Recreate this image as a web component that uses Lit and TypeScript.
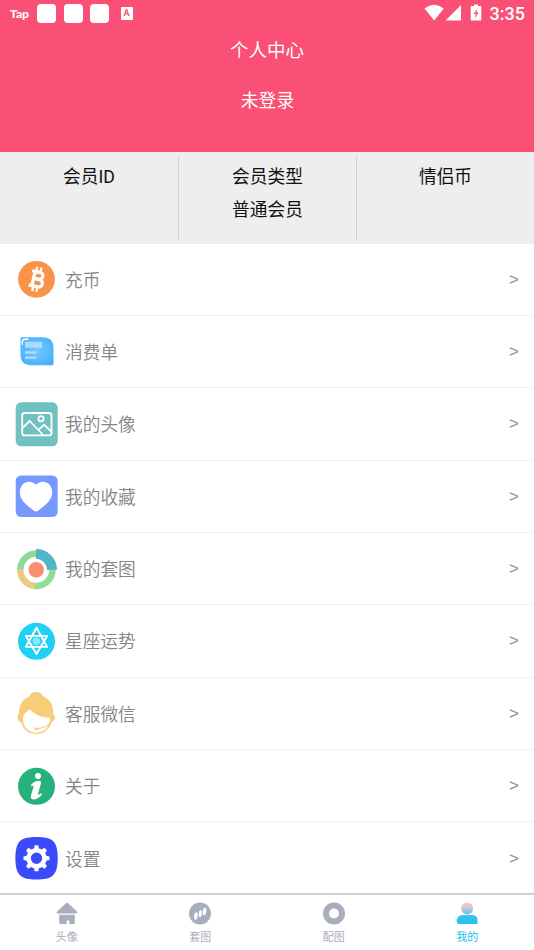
import { LitElement, html, svg, css } from "lit";
import { customElement } from "lit/decorators.js";
import { classMap } from "lit/directives/class-map.js";

const coin = svg`
  <circle cx="22" cy="22" r="18.400" fill="#f9924a"/>
  <g transform="rotate(12 22 22)" fill="none" stroke="#fff">
    <path d="M16 14.500h8.200a3.400 3.400 0 0 1 0 6.900h-5M19 21.700h6a3.700 3.700 0 0 1 0 7.400h-9.500M18.900 14.500v14.600" stroke-width="3.200"/>
    <path d="M20.200 9.500v4.500M24.400 9.500v4.500M20.200 29.500v4.800M24.400 29.500v4.800" stroke-width="2.300"/>
  </g>`;

const bill = svg`
  <defs><radialGradient id="bill" cx=".5" cy=".45" r=".75">
    <stop offset="0" stop-color="#7cc6ff"/><stop offset="1" stop-color="#35aef8"/>
  </radialGradient></defs>
  <path d="M6 8.500Q6 7 7.500 7H28Q39 7 39 18V33.500Q39 35 37.500 35H17Q6 35 6 24Z" fill="url(#bill)"/>
  <path d="M10.500 11.500h17v6h-17z" fill="#a9dcff"/>
  <path d="M10.500 21h11.500v2.500H10.500zM10.500 26.200h11.500v2.500H10.500z" fill="#a9dcff"/>
  <path d="M7.800 14.500v-3q0-2.600 2.600-2.600h3.400" fill="none" stroke="#fff" stroke-width="1.400"/>`;

const picture = svg`
  <rect x="1.200" y="0" width="42" height="44" rx="5.500" fill="#70c1c1"/>
  <g fill="none" stroke="#fff" stroke-width="1.800" stroke-linejoin="round">
    <rect x="7.700" y="10.700" width="29.300" height="22.400" rx="2.500"/>
    <circle cx="26.500" cy="16.400" r="2.600"/>
    <path d="M8 25.700l7.200-7 13.500 14M24 27.500l5.700-5 7 6.700"/>
  </g>`;

const heart = svg`
  <rect x="1.200" y="1.200" width="42" height="41.600" rx="5.500" fill="#7699ff"/>
  <path d="M21.500 10.500C18.500 6.800 13 6.500 9.500 9 5.500 12 4.300 18 6.300 23 8.800 28.800 14.500 32.500 19.300 36.400Q21.500 38 23.700 36.400C28.500 32.500 34.200 28.800 36.700 23 38.700 18 37.500 12 33.500 9 30 6.500 24.500 6.800 21.500 10.500Z" fill="#fff"/>`;

const rings = svg`
  <g fill="none" stroke-width="6.500">
    <path d="M21.500 6.300A16.200 16.200 0 0 0 5.800 22.500" stroke="#8fd996"/>
    <path d="M5.800 22.500A16.200 16.200 0 0 0 20.500 38.600" stroke="#eacb80"/>
    <path d="M20.500 38.600A16.200 16.200 0 0 0 38 22.500" stroke="#94dc91"/>
    <path d="M21.500 6.500A16.500 16.500 0 0 1 37.600 22.500" stroke="#51b7c8" stroke-width="10"/>
  </g>
  <circle cx="21.700" cy="22.500" r="7.700" fill="#fb8c70"/>`;

const star = svg`
  <circle cx="22" cy="22" r="18.500" fill="#1fd2f5"/>
  <path d="M22 8.400L32.600 27.600H11.400ZM22 34.800L11.400 16.600H32.600Z" fill="none" stroke="#fff" stroke-width="1.900" stroke-linejoin="round"/>
  <circle cx="22" cy="21.900" r="3.800" fill="#8de8fb"/>`;

const agent = svg`
  <path d="M15 5C16.500-.7 27-.7 28.500 5 35.500 8 39 13.500 38.700 22.500 41.500 24.500 41 29.500 37.200 30.700 35 38 29 42.700 21.700 42.700S8.500 38 6.500 30.700C2.500 30 2 24.500 4.500 22.500 4.300 13.500 8 8 15 5Z" fill="#f8cd7a"/>
  <path d="M15.500 18C20 23.500 27 26.500 35.600 26.500 35.800 35 29.500 41.400 21.800 41.400 13.800 41.400 8.300 35.500 8.500 27.500 8.700 23 11.500 20.500 15.500 18Z" fill="#fff"/>
  <path d="M36.500 30Q32.500 36.700 22 37.500" fill="none" stroke="#f8cd7a" stroke-width="1"/>
  <ellipse cx="22" cy="37.500" rx="2" ry="1.400" fill="#f8cd7a"/>`;

const info = svg`
  <circle cx="22" cy="22" r="18.500" fill="#26b17d"/>
  <circle cx="23.500" cy="11.700" r="3" fill="#fff"/>
  <path d="M16.500 20.500Q20.500 16.300 25.500 16.500 27 17 26.500 19L23.300 30.300Q24 31 26.600 28.700L27.200 30.400Q23.500 35.200 18.500 35.200 15.500 34.700 16.500 31L19.300 21.700Q18.700 21 17 22Z" fill="#fff"/>`;

const gear = svg`
  <path d="M22 .8C37 .8 43.200 4 43.200 22S37 43.200 22 43.200 .9 40 .9 22 7 .8 22 .8Z" fill="#3a4bfc"/>
  <circle cx="22" cy="22" r="8" fill="none" stroke="#fff" stroke-width="4.600"/>
  <g fill="#fff">
    ${[0, 45, 90, 135, 180, 225, 270, 315].map(
      (a) => svg`<path d="M19.500 12.500L20.200 9h3.600l.7 3.500z" transform="rotate(${a} 22 22)"/>`
    )}
  </g>`;

const rows = [
  { label: "充币", icon: coin },
  { label: "消费单", icon: bill },
  { label: "我的头像", icon: picture },
  { label: "我的收藏", icon: heart },
  { label: "我的套图", icon: rings },
  { label: "星座运势", icon: star },
  { label: "客服微信", icon: agent },
  { label: "关于", icon: info },
  { label: "设置", icon: gear },
];

const tabs = [
  {
    label: "头像",
    icon: svg`<path d="M11.200 1Q12 .4 12.800 1L22 9.500Q23 11.500 21.500 11.500H2.500Q1 11.500 2 9.500ZM4.200 12.800H19.800V20.500Q19.800 22 18.300 22H14.300V18.500H11.700V22H5.700Q4.200 22 4.200 20.500Z" fill="#a9aebf"/>`,
  },
  {
    label: "套图",
    icon: svg`<circle cx="12" cy="11.500" r="11" fill="#a9aebf"/>
      <g fill="#fff"><ellipse cx="7.900" cy="14" rx="1.700" ry="3.800" transform="rotate(8 7.900 14)"/><ellipse cx="12.300" cy="11.700" rx="1.500" ry="3.600" transform="rotate(8 12.300 11.700)"/><ellipse cx="16.500" cy="9.500" rx="1.700" ry="3.800" transform="rotate(8 16.500 9.500)"/></g>`,
  },
  {
    label: "配图",
    icon: svg`<circle cx="12" cy="11.500" r="8" fill="none" stroke="#a9aebf" stroke-width="6"/>`,
  },
  {
    label: "我的",
    active: true,
    icon: svg`<defs>
        <linearGradient id="head" x2="0" y2="1"><stop offset="0" stop-color="#ffc5cc"/><stop offset=".35" stop-color="#e6c5d4"/><stop offset="1" stop-color="#55c3ea"/></linearGradient>
        <linearGradient id="body" x2="0" y2="1"><stop offset="0" stop-color="#46c0ea"/><stop offset="1" stop-color="#1fc4ee"/></linearGradient>
      </defs>
      <path d="M7.500 13H17Q22.500 13 22.500 18V22H4Q1.700 22 1.700 19.500 1.700 13 7.500 13Z" fill="url(#body)"/>
      <circle cx="12.200" cy="6.500" r="6" fill="url(#head)"/>`,
  },
];

@customElement("app-root")
export class AppRoot extends LitElement {
  static styles = css`
    :host {
      display: flex;
      flex-direction: column;
      width: 534px;
      height: 950px;
      overflow: hidden;
      background: #fff;
      font-family: Roboto, "Noto Sans CJK SC", sans-serif;
    }
    .header {
      height: 151.600px;
      flex: none;
      background: #fa5075;
      color: #fff;
      text-align: center;
    }
    .status {
      height: 27px;
      display: flex;
      align-items: center;
      padding: 0 9px 0 10px;
    }
    .tap {
      font: 900 12px/26px Lato, sans-serif;
      width: 27px;
      text-align: left;
      letter-spacing: 0;
    }
    .blocks {
      display: flex;
      gap: 7.500px;
      flex: 1;
      align-items: center;
    }
    .block {
      width: 19px;
      height: 19px;
      border-radius: 4px;
      background: #fff;
    }
    .badge {
      width: 12px;
      height: 13px;
      margin-left: 4px;
      border-radius: 1px;
      background: #fff;
      color: #fa5075;
      font: 700 9px/13px Roboto, sans-serif;
    }
    .signals {
      width: 60px;
      height: 20px;
      margin-right: 6px;
      margin-top: -1px;
    }
    .time {
      font-size: 18px;
      font-weight: 500;
      line-height: 28px;
    }
    .title {
      font-size: 18.500px;
      line-height: 28px;
      margin-top: 10px;
    }
    .login {
      font-size: 17.800px;
      line-height: 28px;
      margin-top: 22px;
      padding-left: 1px;
    }
    .stats {
      height: 92px;
      flex: none;
      box-sizing: border-box;
      padding: 4px 0;
      display: grid;
      grid-template-columns: repeat(3, 1fr);
      background: #eee;
      color: #111;
      text-align: center;
      font-size: 17.700px;
      line-height: 33.500px;
    }
    .stat {
      padding-top: 5px;
    }
    .stat + .stat {
      border-left: 1px solid #d2d2d2;
    }
    .list {
      flex: none;
    }
    .row {
      height: 72.350px;
      box-sizing: border-box;
      border-bottom: 1.500px solid #f1f1f1;
      padding: 0 15px 0 14px;
      display: flex;
      align-items: center;
      color: #8c8c8c;
      font-size: 17.700px;
    }
    .row:last-child {
      border-bottom: none;
      height: 71px;
      padding-top: 1px;
    }
    .icon {
      width: 44px;
      height: 44px;
      margin-right: 7px;
      overflow: visible;
    }
    .label {
      flex: 1;
      font-family: "Noto Sans CJK SC", sans-serif;
      font-weight: 350;
      color: #858585;
      margin-top: -1px;
    }
    .arrow {
      font-family: "Liberation Sans", sans-serif;
      font-size: 17px;
      margin-top: 1px;
    }
    .tabs {
      flex: 1;
      border-top: 2px solid #cfcfcf;
      display: grid;
      grid-template-columns: repeat(4, 1fr);
    }
    .tab {
      display: flex;
      flex-direction: column;
      align-items: center;
      padding-top: 7px;
      font-size: 11px;
      line-height: 16px;
      color: #a9aebf;
    }
    .tab.active {
      color: #20bfee;
    }
    .glyph {
      width: 24px;
      height: 23px;
      margin-bottom: 5px;
    }
  `;

  render() {
    return html`
      <div class="header">
        <div class="status">
          <span class="tap">Tap</span>
          <div class="blocks">
            <span class="block"></span><span class="block"></span><span class="block"></span>
            <span class="badge">A</span>
          </div>
          <svg class="signals" viewBox="0 0 60 20" fill="#fff">
            <path d="M.5 5.500Q10-1.800 19.800 5.500L10.200 17.500ZM37 2V17.500H21.500Z" />
            <path d="M50 1.500h4v1.500h2.500q.8 0 .8.800V16.700q0 .8-.8.800h-9q-.8 0-.8-.8V3.800q0-.8.800-.8H50z" />
            <path d="M53.500 5.500L49.500 11h2.300l-1 4.500 3.900-6h-2.300z" fill="#fa5075" />
          </svg>
          <span class="time">3:35</span>
        </div>
        <div class="title">个人中心</div>
        <div class="login">未登录</div>
      </div>
      <div class="stats">
        <div class="stat"><div>会员ID</div></div>
        <div class="stat"><div>会员类型</div><div>普通会员</div></div>
        <div class="stat"><div>情侣币</div></div>
      </div>
      <div class="list">
        ${rows.map(
          (r) => html`<div class="row">
            <svg class="icon" viewBox="-0.5 -0.3 44 44">${r.icon}</svg>
            <span class="label">${r.label}</span>
            <span class="arrow">&gt;</span>
          </div>`
        )}
      </div>
      <div class="tabs">
        ${tabs.map(
          (t) => html`<div class=${classMap({ tab: true, active: !!t.active })}>
            <svg class="glyph" viewBox="0 0 24 23">${t.icon}</svg>
            <span>${t.label}</span>
          </div>`
        )}
      </div>
    `;
  }
}
